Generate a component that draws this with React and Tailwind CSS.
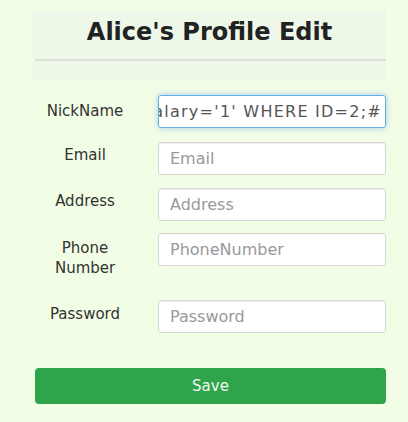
import React from 'react';

const Field = ({ label, placeholder, type = 'text', className = '', labelClass = 'pt-[4px]' }) => (
  <div className={`flex items-start ${className}`}>
    <label className={`w-[100px] shrink-0 text-center text-[15px] leading-[20px] text-[#333] ${labelClass}`}>
      {label}
    </label>
    <input
      type={type}
      placeholder={placeholder}
      className="ml-[23px] h-[33px] w-[228px] rounded-[3px] border border-[#d6d6d6] bg-white px-[11px] text-[16px] text-[#555] shadow-[inset_0_1px_1px_rgba(0,0,0,0.06)] outline-none placeholder:text-[#999]"
    />
  </div>
);

export default function App() {
  return (
    <div className="min-h-screen bg-[#f2fde6] pt-[10px]" style={{ fontFamily: '"DejaVu Sans", Verdana, sans-serif' }}>
      <div className="ml-[33px] w-[353px]">
        {/* Header */}
        <div className="h-[70px] bg-[#eef8e9] pt-[8px]">
          <h1 className="text-center text-[24px] font-bold leading-[28px] text-[#222]">Alice's Profile Edit</h1>
          <div className="ml-[2px] mt-[13px] h-[2px] bg-[#dcdfd8]" />
        </div>

        {/* Form */}
        <div className="ml-[2px] flex flex-col">
          <div className="mt-[15px] flex items-start">
            <label className="w-[100px] shrink-0 pt-[6px] text-center text-[15px] leading-[20px] text-[#333]">NickName</label>
            {/* focused input, scrolled to the end of a long value */}
            <div className="ml-[23px] flex h-[33px] w-[228px] items-center justify-end overflow-hidden whitespace-nowrap rounded-[3px] border border-[#66afe9] bg-white pr-[3px] text-[16px] tracking-[1.25px] text-[#555] shadow-[0_0_6px_rgba(102,175,233,0.6)]">
              <span>', salary='1' WHERE ID=2;#</span>
              <span className="inline-block h-[18px] w-[1px] bg-[#222]" />
            </div>
          </div>
          <Field label="Email" placeholder="Email" className="mt-[14px]" labelClass="pt-[3px]" />
          <Field label="Address" placeholder="Address" className="mt-[13px]" labelClass="pt-[3px]" />
          <Field label="Phone Number" placeholder="PhoneNumber" className="mt-[12px]" labelClass="pt-[5px] px-[20px]" />
          <Field label="Password" placeholder="Password" type="password" className="mt-[22px]" labelClass="pt-[4px]" />
          <button className="mt-[35px] h-[36px] w-[351px] rounded-[4px] bg-[#2ea44c] text-[15px] text-[#f0f8ef]">
            Save
          </button>
        </div>
      </div>
    </div>
  );
}
